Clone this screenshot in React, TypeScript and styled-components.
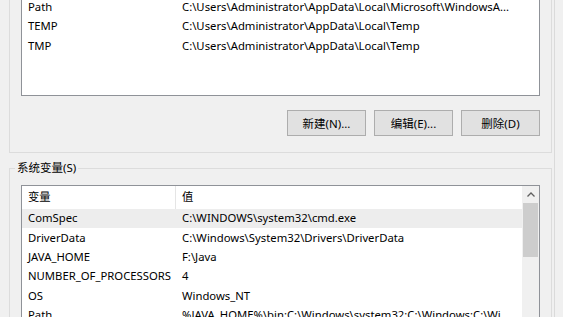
import styled, { createGlobalStyle } from "styled-components";

const GlobalStyle = createGlobalStyle`
  html, body {
    margin: 0;
    padding: 0;
    background: #f0f0f0;
  }
  body {
    font-family: "Noto Sans", "Noto Sans CJK SC", sans-serif;
    font-size: 11.3px;
    color: #000000;
  }
`;

type EnvVar = { name: string; value: string };

const userVars: EnvVar[] = [
  { name: "Path", value: "C:\\Users\\Administrator\\AppData\\Local\\Microsoft\\WindowsA..." },
  { name: "TEMP", value: "C:\\Users\\Administrator\\AppData\\Local\\Temp" },
  { name: "TMP", value: "C:\\Users\\Administrator\\AppData\\Local\\Temp" },
];

const systemVars: EnvVar[] = [
  { name: "ComSpec", value: "C:\\WINDOWS\\system32\\cmd.exe" },
  { name: "DriverData", value: "C:\\Windows\\System32\\Drivers\\DriverData" },
  { name: "JAVA_HOME", value: "F:\\Java" },
  { name: "NUMBER_OF_PROCESSORS", value: "4" },
  { name: "OS", value: "Windows_NT" },
  { name: "Path", value: "%JAVA_HOME%\\bin;C:\\Windows\\system32;C:\\Windows;C:\\Wi..." },
];

const App = () => {
  return (
    <Page>
      <GlobalStyle />
      <Dialog>
        <UserGroup>
          <UserList>
            <RowStack>
              {userVars.map((v) => (
                <Row key={v.name}>
                  <Cell>{v.name}</Cell>
                  <Cell>{v.value}</Cell>
                </Row>
              ))}
            </RowStack>
          </UserList>

          <ButtonRow>
            <DialogButton>新建(N)...</DialogButton>
            <DialogButton>编辑(E)...</DialogButton>
            <DialogButton>删除(D)</DialogButton>
          </ButtonRow>
        </UserGroup>

        <SystemGroup>
          <Legend>系统变量(S)</Legend>
          <SystemList>
            <ListBody>
              <HeaderRow>
                <HeaderCell $divider>变量</HeaderCell>
                <HeaderCell>值</HeaderCell>
              </HeaderRow>
              {systemVars.map((v, i) => (
                <Row key={v.name} $selected={i === 0}>
                  <Cell>{v.name}</Cell>
                  <Cell>{v.value}</Cell>
                </Row>
              ))}
            </ListBody>
            <ScrollBar>
              <ArrowButton>
                <svg width="8" height="5" viewBox="0 0 8 5">
                  <path d="M0.5 4.5 L4 1 L7.5 4.5" fill="none" stroke="#606060" strokeWidth="1.3" />
                </svg>
              </ArrowButton>
              <Thumb />
            </ScrollBar>
          </SystemList>
        </SystemGroup>
      </Dialog>
      <Edge />
    </Page>
  );
};

export default App;

const Page = styled.div`
  width: 563px;
  height: 317px;
  overflow: hidden;
  display: flex;
  background: #f0f0f0;
`;

const Dialog = styled.div`
  width: 554px;
  padding-left: 9px;
  box-sizing: border-box;
  display: flex;
  flex-direction: column;
`;

const Edge = styled.div`
  width: 1px;
  background: #dadada;
`;

const UserGroup = styled.div`
  width: 543px;
  box-sizing: border-box;
  border: 1px solid #dcdcdc;
  border-top: none;
  padding: 0 11px 16px 11px;
`;

const ListFrame = styled.div`
  background: #ffffff;
  border: 1px solid #8f9298;
  box-sizing: border-box;
  overflow: hidden;
`;

const UserList = styled(ListFrame)`
  border-top: none;
  height: 96px;
`;

const RowStack = styled.div`
  margin-top: -2.7px;
`;

const Row = styled.div<{ $selected?: boolean }>`
  display: grid;
  grid-template-columns: 154px 1fr;
  align-items: center;
  height: 19.4px;
  background: ${(p) => (p.$selected ? "#ededed" : "transparent")};
`;

const Cell = styled.div`
  padding-left: 6px;
  line-height: 14px;
  white-space: nowrap;
  overflow: hidden;
`;

const ButtonRow = styled.div`
  display: flex;
  justify-content: flex-end;
  gap: 8px;
  margin-top: 14px;
`;

const DialogButton = styled.button`
  width: 79px;
  height: 26px;
  padding: 0;
  background: #e1e1e1;
  border: 1px solid #adadad;
  border-radius: 0;
  font-family: "Noto Sans", "Noto Sans CJK SC", sans-serif;
  font-size: 11.5px;
  color: #000000;
`;

const SystemGroup = styled.fieldset`
  width: 543px;
  box-sizing: border-box;
  margin: 7px 0 0 0;
  padding: 0 11px;
  border: 1px solid #dcdcdc;
  min-width: 0;
`;

const Legend = styled.legend`
  padding: 0 2px;
  margin-left: -6px;
  line-height: 16px;
  font-size: 11.5px;
`;

const SystemList = styled(ListFrame)`
  margin-top: 9px;
  height: 200px;
  display: flex;
`;

const ListBody = styled.div`
  flex: 1;
  min-width: 0;
`;

const HeaderRow = styled.div`
  display: grid;
  grid-template-columns: 154px 1fr;
  height: 22.5px;
  line-height: 22px;
`;

const HeaderCell = styled.div<{ $divider?: boolean }>`
  padding-left: 6px;
  border-right: ${(p) => (p.$divider ? "1px solid #e5e5e5" : "none")};
`;

const ScrollBar = styled.div`
  width: 17px;
  background: #f0f0f0;
  display: flex;
  flex-direction: column;
  align-items: center;
`;

const ArrowButton = styled.div`
  width: 17px;
  height: 17px;
  display: flex;
  align-items: center;
  justify-content: center;
`;

const Thumb = styled.div`
  width: 15px;
  height: 54px;
  background: #cdcdcd;
`;
